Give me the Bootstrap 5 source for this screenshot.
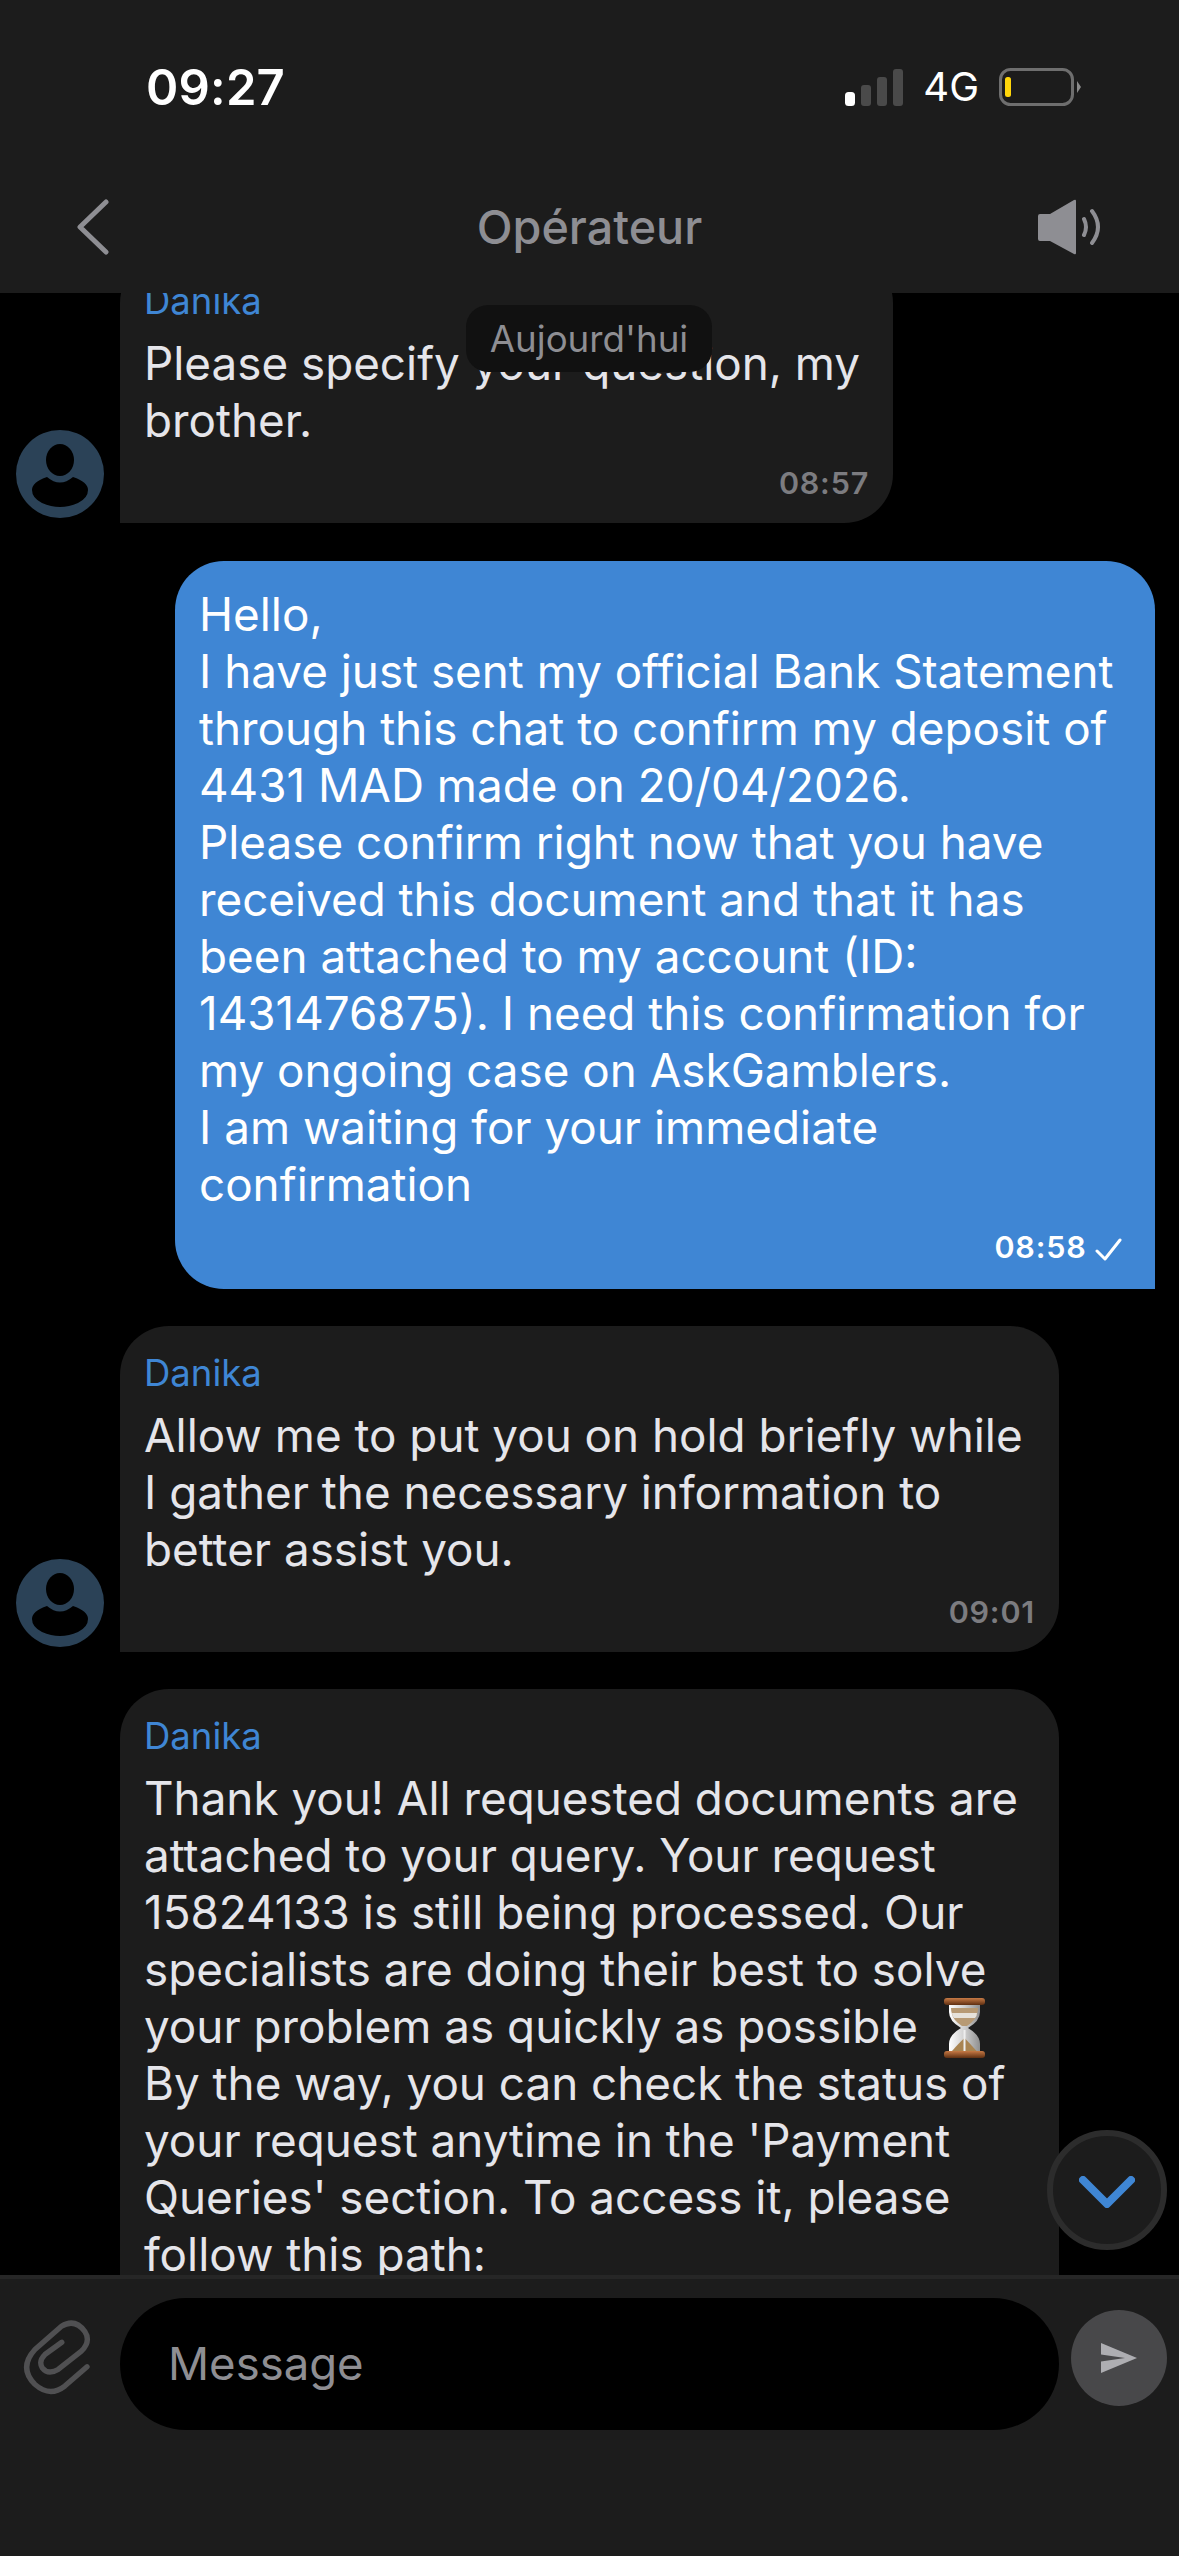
<!doctype html>
<html lang="fr">
<head>
<meta charset="utf-8">
<title>Opérateur</title>
<link href="https://cdn.jsdelivr.net/npm/bootstrap@5.3.0/dist/css/bootstrap.min.css" rel="stylesheet">
<style>
html,body{height:2556px;overflow:hidden}
body{background:#000;font-family:Inter,"Noto Sans",sans-serif;color:#e5e5ea}
.app-shell{width:1179px;height:2556px;position:relative}
.top-bar{height:293px;background:#1c1c1c;flex:none;position:relative;z-index:2}
.status-row{height:104px;margin-top:35px;padding:0 0 0 146px;display:flex}
.clock{font-size:49px;font-weight:600;color:#fff;line-height:1;letter-spacing:.2px}
.status-icons{margin-left:auto;margin-right:98px;gap:20px}
.net-label{font-size:40px;color:#fff;line-height:1;font-weight:400}
.title-row{height:100px;margin-top:38px;padding:0 78px 0 77px;position:relative}
.title-text{font-size:46.700px;color:#8e8e93;font-weight:500;position:absolute;left:0;right:0;text-align:center;line-height:1.2}
.msg-area{flex:1;overflow:hidden;position:relative;min-height:0}
.msg-stack{margin-top:-39px;gap:37px}
.in-row{align-items:flex-end;padding-left:16px;gap:16px}
.avatar-svg{width:88px;height:88px;flex:none;margin-bottom:5px}
.no-avatar{width:88px;flex:none}
.bubble-in{background:#1c1c1c;border-radius:49px 49px 49px 0;padding:25px 24px 22px;width:939px}
.bubble-in .msg-text{padding-right:8px}
.bubble-first{width:773px}
.bubble-open{padding-bottom:160px}
.sender{color:#3f86d4;font-size:36.500px;line-height:44px;margin-bottom:12px}
.msg-text{font-size:45.800px;line-height:57px;letter-spacing:0}
.stamp{font-size:30.500px;font-weight:600;color:#7c7c80;text-align:right;line-height:36px;margin-top:16px;letter-spacing:.8px}
.bubble-out{background:#3f86d4;color:#fff;border-radius:49px 49px 0 49px;margin:1px 24px 0 175px;width:980px;padding:25px 24px 24px}
.bubble-out .stamp{color:#fff;margin-right:9px}
.day-pill{position:absolute;top:12px;left:466px;width:246px;height:67px;background:#111;border-radius:22px;color:#8e8e93;font-size:36.700px;z-index:1}
.down-btn{position:absolute;left:1047px;top:2130px;width:120px;height:120px;border-radius:50%;background:#1c1c1c;border:6px solid #2c2c2c;z-index:3}
.bottom-bar{height:281px;background:#1c1c1c;flex:none;border-top:4px solid #262626;position:relative;z-index:2;padding:19px 12px 0 20px}
.clip-icon{width:73px;height:78px;flex:none;margin-right:27px;margin-top:20px}
.msg-input{width:939px;height:132px;background:#000;border-radius:66px;color:#8e8e93;font-size:45.500px;padding-left:48px;flex:none}
.send-btn{width:96px;height:96px;border-radius:50%;background:#48484a;flex:none;margin-left:12px;margin-top:12px}
.hourglass{width:41px;height:60px;vertical-align:middle;margin:-13px 0 -7px 13px}
</style>
</head>
<body>
<div class="app-shell d-flex flex-column">
  <header class="top-bar">
    <div class="status-row align-items-center">
      <span class="clock">09:27</span>
      <div class="status-icons d-flex align-items-center">
        <svg width="58" height="37" viewBox="0 0 58 37"><rect x="0" y="23" width="10" height="14" rx="3.500" fill="#fff"/><rect x="16" y="16" width="10" height="21" rx="3" fill="#4a4a4a"/><rect x="32" y="8" width="10" height="29" rx="3" fill="#4a4a4a"/><rect x="48" y="0" width="10" height="37" rx="3" fill="#4a4a4a"/></svg>
        <span class="net-label">4G</span>
        <svg width="82" height="38" viewBox="0 0 82 38"><rect x="1.500" y="1.500" width="72" height="35" rx="10" fill="none" stroke="#6e6e6e" stroke-width="3"/><rect x="6" y="9" width="6" height="20" rx="2.500" fill="#ffd60a"/><path d="M78 13l4 6-4 6z" fill="#8a8a8a"/></svg>
      </div>
    </div>
    <div class="title-row d-flex align-items-center justify-content-between">
      <svg width="32" height="56" viewBox="0 0 32 56"><path d="M29 3L3 28l26 25" fill="none" stroke="#8e8e93" stroke-width="5" stroke-linecap="round" stroke-linejoin="round"/></svg>
      <span class="title-text">Opérateur</span>
      <svg width="63" height="56" viewBox="0 0 63 56"><path d="M2 15H12L36 1q2-1 2 1V54q0 2-2 1L12 42H2q-2 0-2-2V17q0-2 2-2z" fill="#8e8e93"/><path d="M46 20q4 8 0 16M54 12q12 16 0 32" fill="none" stroke="#8e8e93" stroke-width="4" stroke-linecap="round"/></svg>
    </div>
  </header>

  <main class="msg-area">
    <div class="day-pill d-flex align-items-center justify-content-center">Aujourd'hui</div>
    <div class="msg-stack d-flex flex-column">
      <div class="in-row d-flex">
        <svg class="avatar-svg" viewBox="0 0 88 88"><circle cx="44" cy="44" r="44" fill="#2b4257"/><ellipse cx="44" cy="30" rx="14" ry="16" fill="#000"/><path d="M31 47Q44 58 57 47 72 52 72 60 72 68 62 73 53 77 44 77 35 77 26 73 16 68 16 60 16 52 31 47z" fill="#000"/></svg>
        <div class="bubble-in bubble-first">
          <div class="sender">Danika</div>
          <div class="msg-text">Please specify your question, my brother.</div>
          <div class="stamp">08:57</div>
        </div>
      </div>
      <div class="bubble-out">
        <div class="msg-text">Hello,<br>I have just sent my official Bank Statement through this chat to confirm my deposit of 4431 MAD made on 20/04/2026.<br>Please confirm right now that you have received this document and that it has been attached to my account (ID: 1431476875). I need this confirmation for my ongoing case on AskGamblers.<br>I am waiting for your immediate confirmation</div>
        <div class="stamp">08:58 <svg width="27" height="24" viewBox="0 0 27 24"><path d="M2 13l8 8L25 2" fill="none" stroke="#fff" stroke-width="3" stroke-linecap="round" stroke-linejoin="round"/></svg></div>
      </div>
      <div class="in-row d-flex">
        <svg class="avatar-svg" viewBox="0 0 88 88"><circle cx="44" cy="44" r="44" fill="#2b4257"/><ellipse cx="44" cy="30" rx="14" ry="16" fill="#000"/><path d="M31 47Q44 58 57 47 72 52 72 60 72 68 62 73 53 77 44 77 35 77 26 73 16 68 16 60 16 52 31 47z" fill="#000"/></svg>
        <div class="bubble-in">
          <div class="sender">Danika</div>
          <div class="msg-text">Allow me to put you on hold briefly while I gather the necessary information to better assist you.</div>
          <div class="stamp">09:01</div>
        </div>
      </div>
      <div class="in-row d-flex">
        <div class="no-avatar"></div>
        <div class="bubble-in bubble-open">
          <div class="sender">Danika</div>
          <div class="msg-text">Thank you! All requested documents are attached to your query. Your request 15824133 is still being processed. Our specialists are doing their best to solve your problem as quickly as possible <svg class="hourglass" viewBox="0 0 41 60" role="img" aria-label="hourglass"><defs><linearGradient id="wood" x1="0" x2="0" y1="0" y2="1"><stop offset="0" stop-color="#c77a45"/><stop offset="1" stop-color="#5e2f12"/></linearGradient><linearGradient id="glass" x1="0" x2="1" y1="0" y2="0"><stop offset="0" stop-color="#fff"/><stop offset=".5" stop-color="#cfcfcf"/><stop offset="1" stop-color="#8f8f8f"/></linearGradient></defs><path d="M5 7h31v7q0 9-12 16 12 7 12 16v7H5v-7q0-9 12-16Q5 23 5 14z" fill="url(#glass)"/><path d="M7 10h27q0 3-1 6-1 6-10 12h-5Q9 22 8 16q-1-3-1-6z" fill="#b79a74"/><path d="M8 15h25q0 3-2 5H10q-2-2-2-5z" fill="#e6e2da"/><path d="M20.500 40q5 5 12 13H8q7-8 12.500-13z" fill="#a98451"/><path d="M20.500 32v21" stroke="#eee" stroke-width="2"/><rect x="0" y="0" width="41" height="7" rx="3" fill="url(#wood)"/><rect x="0" y="53" width="41" height="7" rx="3" fill="url(#wood)"/></svg><br>By the way, you can check the status of your request anytime in the 'Payment Queries' section. To access it, please follow this path:</div>
        </div>
      </div>
    </div>
  </main>

  <div class="down-btn d-flex align-items-center justify-content-center">
    <svg class="mt-1" width="56" height="32" viewBox="0 0 56 32"><path d="M4 4l24 24L52 4" fill="none" stroke="#3f86d4" stroke-width="8" stroke-linecap="round" stroke-linejoin="round"/></svg>
  </div>

  <footer class="bottom-bar d-flex align-items-start">
    <svg class="clip-icon" viewBox="60 85 220 235"><path d="M262 232L195 290Q150 325 105 285 55 235 105 180L185 110Q225 85 255 125 275 155 245 185L175 240Q145 258 127 235 115 215 135 195L186 158" fill="none" stroke="#505052" stroke-width="16" stroke-linecap="round" stroke-linejoin="round"/></svg>
    <div class="msg-input d-flex align-items-center">Message</div>
    <div class="send-btn d-flex align-items-center justify-content-center">
      <svg width="36" height="30" viewBox="0 0 36 30"><path d="M0 0L36 15 0 30V18.500L24 15 0 11.500z" fill="#aeaeb2"/></svg>
    </div>
  </footer>
</div>
<script src="https://cdn.jsdelivr.net/npm/bootstrap@5.3.0/dist/js/bootstrap.bundle.min.js"></script>
</body>
</html>
